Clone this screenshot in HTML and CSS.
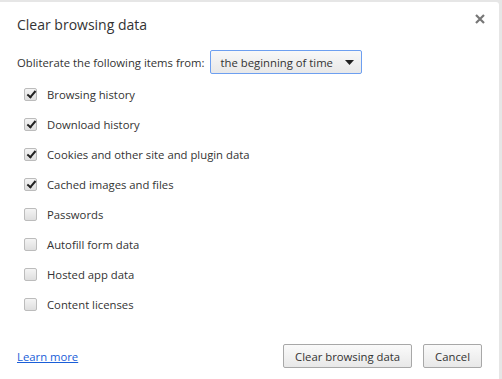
FILE: index.html
```html
<!DOCTYPE html>
<html lang="en">
<head>
    <meta charset="UTF-8">
    <title>Clear browsing data</title>
    <link rel="stylesheet" href="styles.css">
</head>
<body>
    <div class="dialog">
        <div class="title-bar">
            <h1>Clear browsing data</h1>
            <span class="close-btn">
                <svg width="10" height="10" viewBox="0 0 10 10"><path d="M1 1L9 9M9 1L1 9" stroke="#777" stroke-width="2.2"/></svg>
            </span>
        </div>

        <div class="period-row">
            <span>Obliterate the following items from:</span>
            <div class="select">
                <span>the beginning of time</span>
                <svg width="9" height="5" viewBox="0 0 9 5"><path d="M0 0H9L4.5 5Z" fill="#222"/></svg>
            </div>
        </div>

        <ul class="items">
            <li><span class="check on"></span>Browsing history</li>
            <li><span class="check on"></span>Download history</li>
            <li><span class="check on"></span>Cookies and other site and plugin data</li>
            <li><span class="check on"></span>Cached images and files</li>
            <li><span class="check"></span>Passwords</li>
            <li><span class="check"></span>Autofill form data</li>
            <li><span class="check"></span>Hosted app data</li>
            <li><span class="check"></span>Content licenses</li>
        </ul>

        <div class="footer">
            <a href="#" class="learn-more">Learn more</a>
            <div class="buttons">
                <button>Clear browsing data</button>
                <button>Cancel</button>
            </div>
        </div>
    </div>
</body>
</html>
```

FILE: styles.css
```css
body {
    margin: 0;
    background-color: #e6e6e6;
    font-family: "Open Sans", "Noto Sans", Arial, sans-serif;
    font-size: 11.3px;
    color: #333;
    overflow: hidden;
}

.dialog {
    width: 499px;
    height: 377px;
    margin-top: 2px;
    background-color: white;
    border-top-right-radius: 3px;
    position: relative;
}

.title-bar {
    height: 44px;
    padding-left: 17px;
    display: flex;
    align-items: center;
}

.title-bar h1 {
    margin: 0;
    font-size: 14px;
    font-weight: normal;
    color: #333;
}

.close-btn {
    position: absolute;
    top: 10px;
    right: 14px;
}

.period-row {
    display: flex;
    align-items: center;
    gap: 5px;
    padding-left: 17px;
    height: 26px;
    margin-top: 3px;
}

.select {
    width: 150px;
    height: 22px;
    box-sizing: content-box;
    border: 1px solid #6d9ff0;
    border-radius: 2px;
    background: linear-gradient(#f8f8f8, #e8e8e8);
    display: flex;
    align-items: center;
    justify-content: space-between;
    color: #333;
}

.select span {
    margin-left: 10px;
}

.select svg {
    margin-right: 7px;
}

.items {
    list-style: none;
    margin: 4px 0 0;
    padding: 0 0 0 24px;
}

.items li {
    height: 30px;
    display: flex;
    align-items: center;
}

.check {
    width: 11px;
    height: 11px;
    border: 1px solid #bcbcbc;
    border-radius: 2px;
    background: linear-gradient(#f4f4f4, #dedede);
    margin-right: 10px;
    position: relative;
}

.check.on::after {
    content: "";
    position: absolute;
    left: 4px;
    top: 0px;
    width: 3px;
    height: 7px;
    border: solid #222;
    border-width: 0 2px 2px 0;
    transform: rotate(40deg);
}

.footer {
    display: flex;
    justify-content: space-between;
    align-items: center;
    padding: 0 17px;
    margin-top: 25px;
}

.learn-more {
    color: #1a5ed8;
    text-decoration: underline;
}

.buttons {
    display: flex;
    gap: 11px;
}

.buttons button {
    font-family: inherit;
    font-size: 11.3px;
    color: #333;
    height: 24px;
    padding: 0 11px;
    border: 1px solid #a8a8a8;
    border-radius: 2px;
    background: linear-gradient(#fafafa, #e8e8e8);
}
```
